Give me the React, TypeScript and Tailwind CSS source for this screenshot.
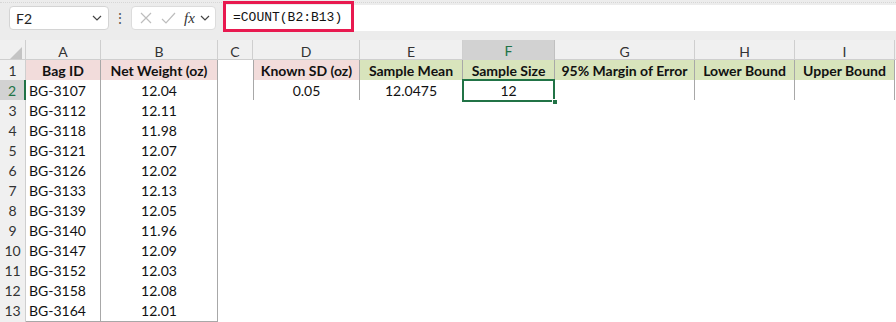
import React from 'react';

/* ============================================================
   Spreadsheet mock — formula bar + grid
   ============================================================ */

const cols = ['A', 'B', 'C', 'D', 'E', 'F', 'G', 'H', 'I'];
const gridCols = 'grid grid-cols-[26px_75px_117px_35px_107px_103px_92px_140px_100px_100px_1fr]';

const bags: [string, string][] = [
  ['BG-3107', '12.04'],
  ['BG-3112', '12.11'],
  ['BG-3118', '11.98'],
  ['BG-3121', '12.07'],
  ['BG-3126', '12.02'],
  ['BG-3133', '12.13'],
  ['BG-3139', '12.05'],
  ['BG-3140', '11.96'],
  ['BG-3147', '12.09'],
  ['BG-3152', '12.03'],
  ['BG-3158', '12.08'],
  ['BG-3164', '12.01'],
];

function Chevron({ className = '' }: { className?: string }) {
  return (
    <svg width="10" height="6" viewBox="0 0 10 6" className={className}>
      <path d="M1 1l4 4 4-4" fill="none" stroke="#444" strokeWidth="1.2" />
    </svg>
  );
}

function FormulaBar() {
  return (
    <div className="h-[40px] bg-[#ececec] relative">
      <div className="absolute top-[2px] left-0 right-0 border-t border-dotted border-[#d6d6d6]" />
      <div className="flex items-center h-full pt-[2px] pb-[6px]">
        {/* Name box */}
        <div className="ml-[9px] w-[100px] h-[24px] bg-white border border-[#d4d4d4] rounded-[4px] flex items-center justify-between px-[6px]">
          <span className="text-[14px] text-[#222]">F2</span>
          <Chevron />
        </div>
        <div className="w-[22px] flex justify-center text-[#555] text-[14px] leading-none">⋮</div>
        {/* Cancel / enter / fx */}
        <div className="w-[85px] h-[24px] bg-white border border-[#dcdcdc] rounded-[4px] flex items-center pl-[7px] gap-[8px]">
          <svg width="14" height="14" viewBox="0 0 14 14">
            <path d="M2 2l10 10M12 2L2 12" stroke="#bdbdbd" strokeWidth="1.2" />
          </svg>
          <svg width="15" height="13" viewBox="0 0 15 13">
            <path d="M1 7l4 4 9-10" fill="none" stroke="#bdbdbd" strokeWidth="1.2" />
          </svg>
          <span className="italic text-[15px] text-[#333] font-['Liberation_Serif',serif] leading-none">fx</span>
          <Chevron className="-ml-[3px]" />
        </div>
        {/* Formula input */}
        <div className="ml-[7px] flex-1 h-[26px] bg-white relative">
          <div className="absolute -top-[4px] left-0 w-[131px] h-[31px] border-[3px] border-[#e8194f]" />
          <span className="absolute left-[10px] top-[4px] font-['Liberation_Mono',monospace] text-[13px] text-[#111] leading-[18px]">
            =COUNT(B2:B13)
          </span>
        </div>
      </div>
    </div>
  );
}

function ColumnHeaders() {
  return (
    <div className={`${gridCols} h-[20px] bg-[#f0f0f0] border-b border-[#cfcfcf]`}>
      <div className="border-r border-[#cfcfcf] relative">
        <svg width="12" height="12" viewBox="0 0 12 12" className="absolute right-[3px] bottom-[3px]">
          <path d="M12 0L12 12L0 12Z" fill="#c4c4c4" />
        </svg>
      </div>
      {cols.map((c) =>
        c === 'F' ? (
          <div
            key={c}
            className="bg-[#d2d2d2] border-r border-[#c0c0c0] border-b-2 border-b-[#217346] -mb-px flex items-center justify-center text-[14px] text-[#217346]"
          >
            {c}
          </div>
        ) : (
          <div key={c} className="border-r border-[#cfcfcf] flex items-center justify-center text-[14px] text-[#333]">
            {c}
          </div>
        )
      )}
      <div />
    </div>
  );
}

function RowHeader({ n, active = false }: { n: number; active?: boolean }) {
  return (
    <div
      className={`flex items-center justify-center text-[14px] border-b border-[#d6d6d6] ${
        active
          ? 'bg-[#d2d2d2] text-[#217346] border-r-2 border-r-[#217346]'
          : 'bg-[#f0f0f0] text-[#333] border-r border-r-[#cfcfcf]'
      }`}
    >
      {n}
    </div>
  );
}

interface CellProps {
  children?: React.ReactNode;
  bordered?: boolean;
  bg?: string;
  bold?: boolean;
  left?: boolean;
  className?: string;
}

function Cell({ children, bordered = false, bg = 'bg-white', bold = false, left = false, className = '' }: CellProps) {
  return (
    <div
      className={`
        ${bg} flex items-center text-[14px] text-[#111] whitespace-nowrap overflow-hidden
        ${left ? 'justify-start pl-[3px]' : 'justify-center'}
        ${bold ? 'font-bold' : ''}
        ${bordered ? 'border-r border-b border-[#a8a8a8]' : ''}
        ${className}
      `}
    >
      {children}
    </div>
  );
}

export default function App() {
  const pink = 'bg-[#f2dcdb]';
  const green = 'bg-[#d8e4bc]';

  return (
    <div className="w-[896px] h-[322px] bg-white overflow-hidden font-['Lato','Open_Sans',sans-serif]">
      <FormulaBar />
      <ColumnHeaders />

      {/* Row 1 — headers */}
      <div className={`${gridCols} h-[20px]`}>
        <RowHeader n={1} />
        <Cell bordered bold bg={pink}>Bag ID</Cell>
        <Cell bordered bold bg={pink}>Net Weight (oz)</Cell>
        <Cell />
        <Cell bordered bold bg={pink} className="border-l">Known SD (oz)</Cell>
        <Cell bordered bold bg={green}>Sample Mean</Cell>
        <Cell bordered bold bg={green}>Sample Size</Cell>
        <Cell bordered bold bg={green}>95% Margin of Error</Cell>
        <Cell bordered bold bg={green}>Lower Bound</Cell>
        <Cell bordered bold bg={green}>Upper Bound</Cell>
        <Cell />
      </div>

      {/* Row 2 — values */}
      <div className={`${gridCols} h-[20px]`}>
        <RowHeader n={2} active />
        <Cell bordered left>{bags[0][0]}</Cell>
        <Cell bordered>{bags[0][1]}</Cell>
        <Cell />
        <Cell bordered className="border-l">0.05</Cell>
        <Cell bordered>12.0475</Cell>
        <div className="relative bg-white">
          <div className="absolute -top-px -left-px right-0 bottom-0 border-2 border-[#217346] flex items-center justify-center text-[14px] text-[#111]">
            12
          </div>
          <div className="absolute -right-[3px] -bottom-[3px] w-[6px] h-[6px] bg-[#217346] border border-white" />
        </div>
        <Cell bordered />
        <Cell bordered />
        <Cell bordered />
        <Cell />
      </div>

      {bags.slice(1).map(([id, w], i) => (
        <div key={id} className={`${gridCols} h-[20px]`}>
          <RowHeader n={i + 3} />
          <Cell bordered left>{id}</Cell>
          <Cell bordered>{w}</Cell>
          <Cell />
          <Cell />
          <Cell />
          <Cell />
          <Cell />
          <Cell />
          <Cell />
          <Cell />
        </div>
      ))}
      <div className={`${gridCols} h-[20px]`}>
        <div className="bg-[#f0f0f0] border-r border-[#cfcfcf]" />
      </div>
    </div>
  );
}
